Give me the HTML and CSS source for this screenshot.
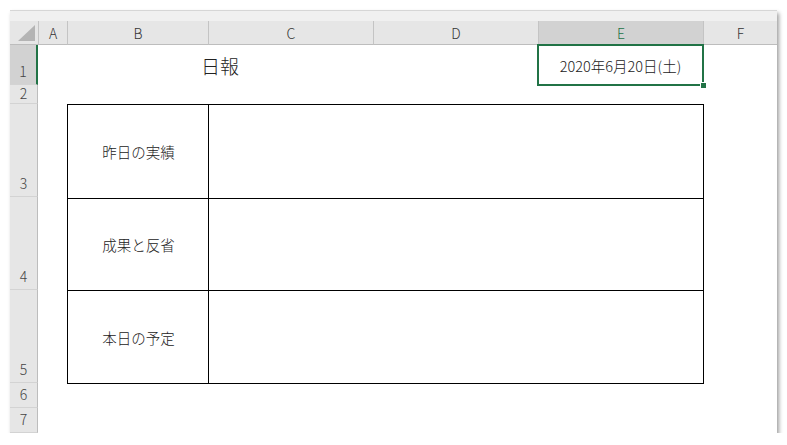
FILE: index.html
```html
<!DOCTYPE html>
<html lang="ja">
<head>
<meta charset="utf-8">
<title>日報</title>
<link rel="stylesheet" href="styles.css">
</head>
<body>
<div class="window">
  <div class="toolbar"></div>
  <div class="sheet">
    <div class="corner"><span class="tri"></span></div>
    <div class="colhead">A</div>
    <div class="colhead">B</div>
    <div class="colhead">C</div>
    <div class="colhead">D</div>
    <div class="colhead selected">E</div>
    <div class="colhead">F</div>

    <div class="rowhead r1 selected">1</div>
    <div class="title">日報</div>
    <div class="date">2020年6月20日(土)</div>

    <div class="rowhead r2">2</div>
    <div class="rowhead r3">3</div>
    <div class="rowhead r4">4</div>
    <div class="rowhead r5">5</div>
    <div class="rowhead r6">6</div>
    <div class="rowhead r7">7</div>

    <div class="report">
      <div class="label">昨日の実績</div>
      <div class="entry"></div>
      <div class="label">成果と反省</div>
      <div class="entry"></div>
      <div class="label">本日の予定</div>
      <div class="entry"></div>
    </div>
  </div>
</div>
</body>
</html>
```

FILE: styles.css
```css
html, body {
  margin: 0;
  padding: 0;
  background: #ffffff;
}

body {
  font-family: "Noto Sans CJK JP", "Liberation Sans", sans-serif;
}

.window {
  margin: 10px 0 0 10px;
  width: 767px;
  height: 423px;
  background: #ffffff;
  box-shadow: 2px 3px 4px rgba(0, 0, 0, 0.38);
  display: flex;
  flex-direction: column;
}

.toolbar {
  height: 10px;
  background: #f0f0f0;
  border-top: 1px solid #d6d6d6;
  flex: none;
}

.sheet {
  flex: 1;
  display: grid;
  grid-template-columns: 28px 29px 141px 165px 165px 165px 1fr;
  grid-template-rows: 24px 40px 19px 93px 93px 93px 25px 25px;
}

.corner {
  grid-column: 1;
  grid-row: 1;
  background: #e6e6e6;
  border-bottom: 1px solid #bdbdbd;
  display: flex;
  align-items: flex-end;
  justify-content: flex-end;
  padding: 0 3px 3px 0;
}

.tri {
  width: 0;
  height: 0;
  border-style: solid;
  border-width: 0 0 16px 17px;
  border-color: transparent transparent #b4b4b4 transparent;
}

.colhead {
  background: #e6e6e6;
  border-left: 1px solid #c4c4c4;
  border-bottom: 1px solid #bdbdbd;
  color: #333333;
  font-size: 14px;
  font-weight: 300;
  display: flex;
  align-items: center;
  justify-content: center;
  padding-top: 1px;
}

.colhead.selected {
  background: #d2d2d2;
  color: #217346;
}

.rowhead {
  grid-column: 1;
  background: #e6e6e6;
  border-right: 1px solid #bdbdbd;
  border-bottom: 1px solid #d3d3d3;
  color: #444444;
  font-size: 14px;
  font-weight: 300;
  line-height: 16px;
  display: flex;
  align-items: flex-end;
  justify-content: center;
  padding-bottom: 5px;
}

.rowhead.selected {
  background: #d2d2d2;
  border-right: 2px solid #217346;
}

.r1 { grid-row: 2; }
.r2 { grid-row: 3; padding-bottom: 2px; }
.r3 { grid-row: 4; }
.r4 { grid-row: 5; }
.r5 { grid-row: 6; }
.r6 { grid-row: 7; }
.r7 { grid-row: 8; }

.title {
  grid-column: 3 / 5;
  grid-row: 2;
  display: flex;
  align-items: center;
  justify-content: center;
  font-size: 19px;
  font-weight: 300;
  color: #222222;
  padding-top: 1px;
}

.date {
  grid-column: 6;
  grid-row: 2;
  position: relative;
  display: flex;
  align-items: center;
  justify-content: center;
  font-size: 14.5px;
  font-weight: 300;
  color: #222222;
}

.date::before {
  content: "";
  position: absolute;
  top: -1px;
  left: -1px;
  right: -1px;
  bottom: -1px;
  border: 2px solid #217346;
}

.date::after {
  content: "";
  position: absolute;
  right: -4px;
  bottom: -4px;
  width: 5px;
  height: 5px;
  background: #217346;
  border: 1px solid #ffffff;
}

.report {
  grid-column: 3 / 7;
  grid-row: 4 / 7;
  margin-right: -1px;
  margin-bottom: -1px;
  border: 1px solid #000000;
  display: grid;
  grid-template-columns: 140px 1fr;
  grid-template-rows: repeat(3, 1fr);
}

.label,
.entry {
  border-top: 1px solid #000000;
}

.label:first-child,
.label:first-child + .entry {
  border-top: none;
}

.entry {
  border-left: 1px solid #000000;
}

.label {
  display: flex;
  align-items: center;
  justify-content: center;
  font-size: 14.5px;
  font-weight: 300;
  color: #222222;
  padding-left: 1px;
}
```
